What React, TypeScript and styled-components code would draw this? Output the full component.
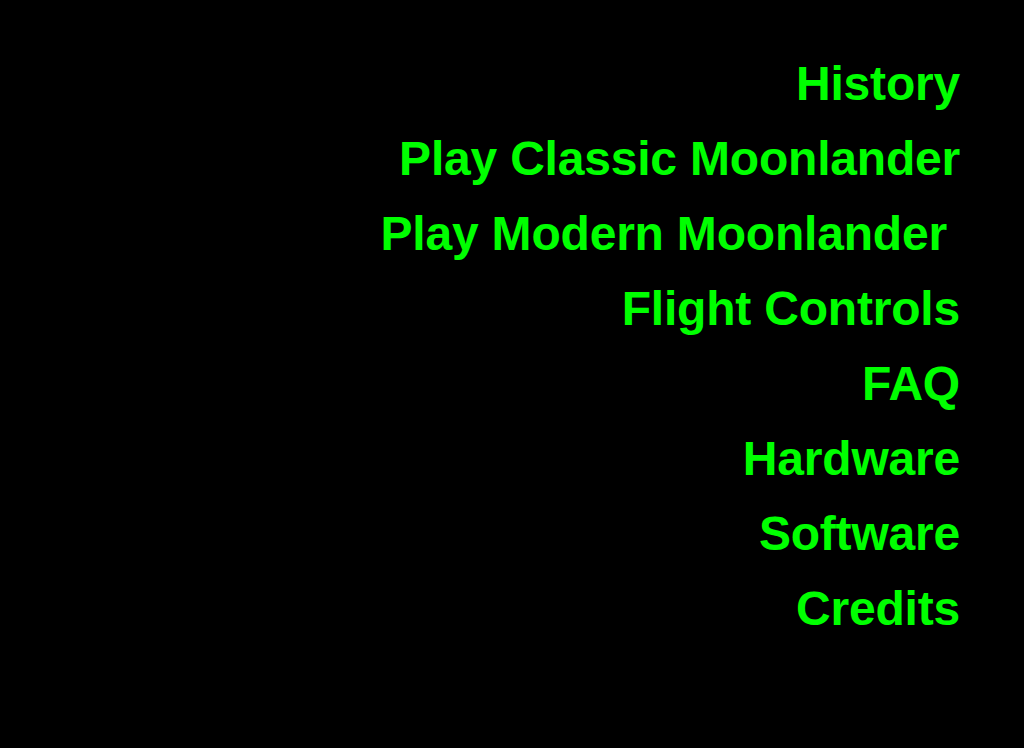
import React from 'react';
import styled, { createGlobalStyle } from 'styled-components';

const GlobalStyle = createGlobalStyle`
  html, body {
    margin: 0;
    padding: 0;
    background: #000;
  }
`;

const Page = styled.div`
  min-height: 748px;
  background: #000;
  box-sizing: border-box;
  padding: 46px 64px 0 0;
`;

const Menu = styled.nav`
  display: flex;
  flex-direction: column;
  align-items: flex-end;
`;

const MenuItem = styled.a`
  display: block;
  font-family: 'Liberation Sans', Arial, Helvetica, sans-serif;
  font-weight: bold;
  font-size: 48px;
  line-height: 75px;
  letter-spacing: -0.2px;
  color: #00ff00;
  text-decoration: none;
  white-space: pre;
  cursor: pointer;
`;

const items = [
  'History',
  'Play Classic Moonlander',
  'Play Modern Moonlander ',
  'Flight Controls',
  'FAQ',
  'Hardware',
  'Software',
  'Credits',
];

const App: React.FC = () => {
  return (
    <>
      <GlobalStyle />
      <Page>
        <Menu>
          {items.map((label) => (
            <MenuItem key={label}>{label}</MenuItem>
          ))}
        </Menu>
      </Page>
    </>
  );
};

export default App;
